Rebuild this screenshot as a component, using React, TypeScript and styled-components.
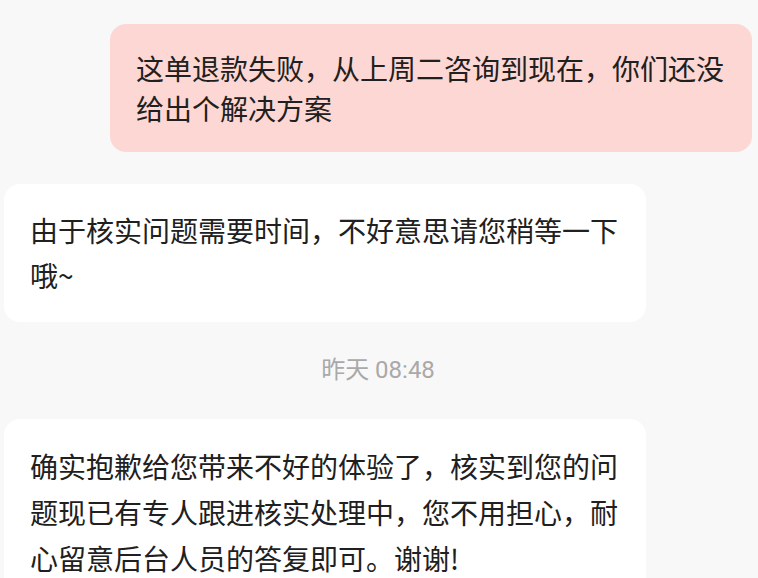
import React from "react";
import styled, { createGlobalStyle } from "styled-components";

const GlobalStyle = createGlobalStyle`
  html, body {
    margin: 0;
    padding: 0;
    background: #f8f8f8;
  }
  body {
    font-family: "Noto Sans CJK SC", "Noto Sans", sans-serif;
    overflow: hidden;
  }
`;

const ChatList = styled.div`
  display: flex;
  flex-direction: column;
  padding: 24px 6px 0 4px;
  height: 578px;
  box-sizing: border-box;
  overflow: hidden;
`;

const Row = styled.div<{ $mine?: boolean }>`
  display: flex;
  justify-content: ${(p) => (p.$mine ? "flex-end" : "flex-start")};
  margin-bottom: ${(p) => (p.$mine ? "32px" : "0")};
`;

const Bubble = styled.div<{ $mine?: boolean; $lh?: number }>`
  max-width: 642px;
  box-sizing: border-box;
  padding: 24px 26px;
  border-radius: 16px;
  background: ${(p) => (p.$mine ? "#fdd7d3" : "#ffffff")};
  color: #202020;
  font-size: 28px;
  line-height: ${(p) => p.$lh ?? 45}px;
  word-break: break-all;
`;

const TimeStamp = styled.div`
  text-align: center;
  font-family: "Roboto", "Noto Sans CJK SC", sans-serif;
  font-size: 24px;
  line-height: 34px;
  color: #a9a9a9;
  margin: 31px 0 32px;
`;

export default function App() {
  return (
    <>
      <GlobalStyle />
      <ChatList>
        <Row $mine>
          <Bubble $mine $lh={40}>
            这单退款失败，从上周二咨询到现在，你们还没给出个解决方案
          </Bubble>
        </Row>
        <Row>
          <Bubble>由于核实问题需要时间，不好意思请您稍等一下哦~</Bubble>
        </Row>
        <TimeStamp>昨天 08:48</TimeStamp>
        <Row>
          <Bubble $lh={46}>
            确实抱歉给您带来不好的体验了，核实到您的问题现已有专人跟进核实处理中，您不用担心，耐心留意后台人员的答复即可。谢谢!
          </Bubble>
        </Row>
      </ChatList>
    </>
  );
}
